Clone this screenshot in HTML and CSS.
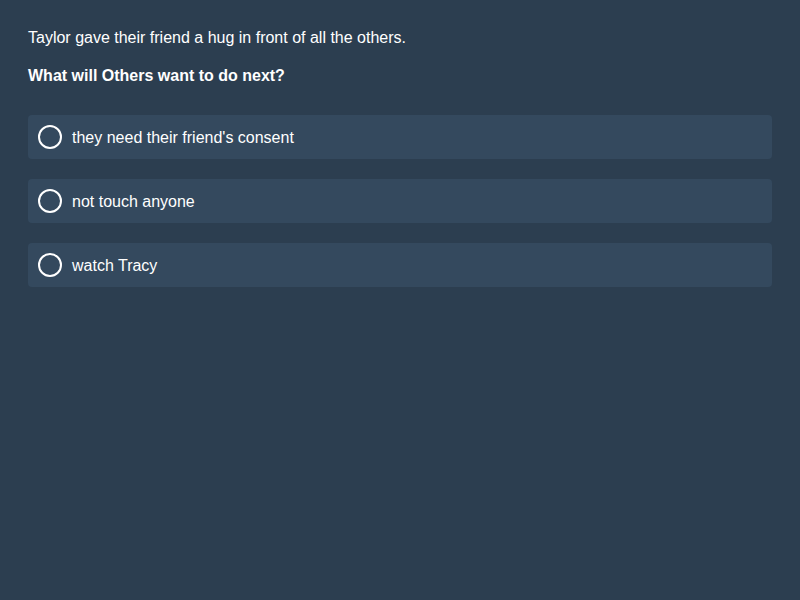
FILE: index.html
```html
<!DOCTYPE html>
<html>
<head>
<meta charset="utf-8">
<link rel="stylesheet" href="styles.css">
</head>
<body>
<main class="quiz">
  <p class="context">Taylor gave their friend a hug in front of all the others.</p>
  <p class="question">What will Others want to do next?</p>
  <div class="options">
    <label class="option"><span class="radio"></span><span class="label">they need their friend's consent</span></label>
    <label class="option"><span class="radio"></span><span class="label">not touch anyone</span></label>
    <label class="option"><span class="radio"></span><span class="label">watch Tracy</span></label>
  </div>
</main>
</body>
</html>
```
FILE: styles.css
```css
html, body {
  margin: 0;
  padding: 0;
  background: #2c3e50;
  height: 100%;
}
body {
  font-family: "Liberation Sans", Arial, sans-serif;
  font-size: 16px;
  color: #ffffff;
}
.quiz {
  padding: 29px 28px 28px;
}
.context {
  margin: 0 0 20px;
  line-height: 18px;
}
.question {
  margin: 0 0 30px;
  line-height: 18px;
  font-weight: bold;
}
.options {
  display: flex;
  flex-direction: column;
  gap: 20px;
}
.option {
  display: flex;
  align-items: center;
  gap: 10px;
  height: 44px;
  box-sizing: border-box;
  padding: 0 10px;
  background: #34495e;
  border-radius: 4px;
}
.radio {
  width: 24px;
  height: 24px;
  box-sizing: border-box;
  border: 2px solid #ffffff;
  border-radius: 50%;
  flex: none;
}
.label {
  line-height: 18px;
  padding-top: 2px;
}
```
